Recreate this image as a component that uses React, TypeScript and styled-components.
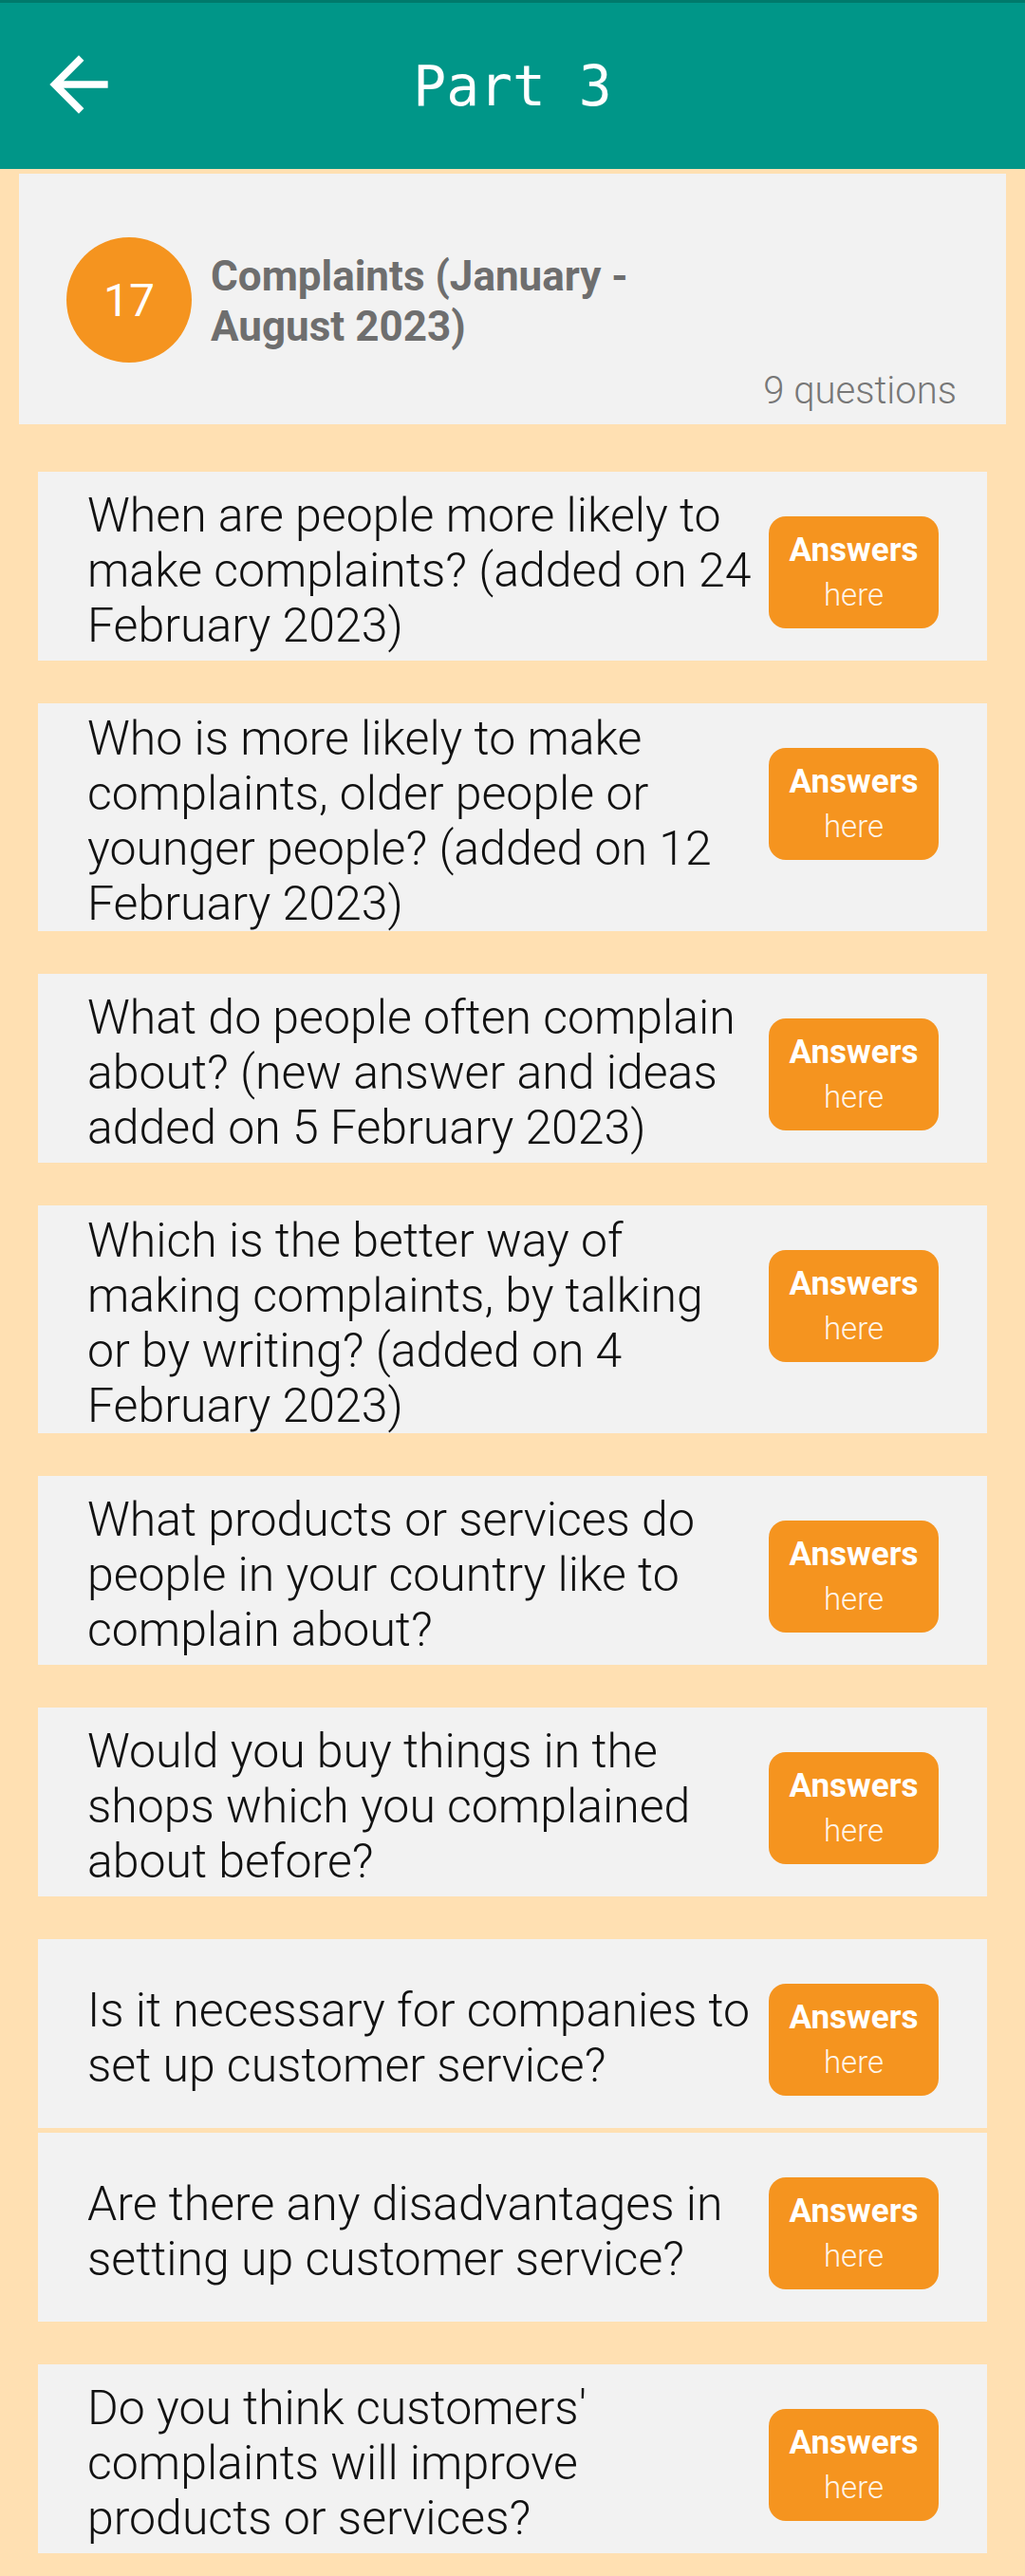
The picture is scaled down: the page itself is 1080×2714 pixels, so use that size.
import React from "react";
import styled, { createGlobalStyle } from "styled-components";

const GlobalStyle = createGlobalStyle`
  html, body {
    margin: 0;
    padding: 0;
    background: #ffe0b2;
  }
  * { box-sizing: border-box; }
`;

const Page = styled.div`
  width: 1080px;
  min-height: 2714px;
  background: #ffe0b2;
  font-family: Roboto, "Noto Sans", Arial, sans-serif;
`;

const Header = styled.header`
  height: 178px;
  background: #009688;
  border-top: 3px solid #00796b;
  display: grid;
  grid-template-columns: 1fr auto 1fr;
  align-items: center;
  padding-left: 37px;
`;

const BackButton = styled.div`
  width: 92px;
  height: 92px;
  display: flex;
  align-items: center;
  justify-content: center;
  margin-top: -3px;
`;

const Title = styled.h1`
  margin: 0;
  margin-left: -37px;
  font-family: "DejaVu Sans Mono", "Liberation Mono", monospace;
  font-weight: 400;
  font-size: 58px;
  color: #ffffff;
  letter-spacing: 0;
  line-height: 1;
`;

const TopicCard = styled.section`
  margin: 5px 20px 0;
  padding: 67px 52px 12px 50px;
  background: #f2f2f2;
`;

const TopicRow = styled.div`
  display: flex;
  align-items: center;
  gap: 20px;
`;

const NumberBadge = styled.div`
  width: 132px;
  height: 132px;
  flex: none;
  border-radius: 50%;
  background: #f5941f;
  color: #ffffff;
  display: flex;
  align-items: center;
  justify-content: center;
  font-size: 48px;
  font-weight: 400;
`;

const TopicTitle = styled.div`
  width: 520px;
  margin-top: 3px;
  font-size: 44px;
  font-weight: 700;
  line-height: 53px;
  color: #6e6e6e;
`;

const QuestionCount = styled.div`
  margin-top: 7px;
  text-align: right;
  font-size: 40px;
  font-weight: 300;
  line-height: 46px;
  color: #777777;
`;

const List = styled.div`
  padding: 5px 40px 23px;
`;

const QuestionCard = styled.div<{ $tight?: boolean }>`
  margin-top: ${(p) => (p.$tight ? "5px" : "45px")};
  min-height: 199px;
  padding: 8px 51px 0 52px;
  background: #f2f2f2;
  display: flex;
  align-items: center;
  gap: 18px;
`;

const QuestionText = styled.div`
  flex: 1;
  font-size: 50px;
  font-weight: 300;
  line-height: 58px;
  color: #111111;
`;

const AnswerButton = styled.div`
  flex: none;
  align-self: flex-start;
  margin-top: 39px;
  width: 179px;
  height: 118px;
  border-radius: 18px;
  background: #f5941f;
  display: flex;
  flex-direction: column;
  align-items: center;
  justify-content: center;
  color: #ffffff;
`;

const AnswerLabel = styled.span`
  font-size: 35px;
  font-weight: 700;
  line-height: 47px;
`;

const AnswerSub = styled.span`
  font-size: 33px;
  font-weight: 300;
  line-height: 47px;
  color: rgba(255, 255, 255, 0.92);
`;

const questions: { text: string; tight?: boolean }[] = [
  { text: "When are people more likely to make complaints? (added on 24 February 2023)" },
  { text: "Who is more likely to make complaints, older people or younger people? (added on 12 February 2023)" },
  { text: "What do people often complain about? (new answer and ideas added on 5 February 2023)" },
  { text: "Which is the better way of making complaints, by talking or by writing? (added on 4 February 2023)" },
  { text: "What products or services do people in your country like to complain about?" },
  { text: "Would you buy things in the shops which you complained about before?" },
  { text: "Is it necessary for companies to set up customer service?" },
  { text: "Are there any disadvantages in setting up customer service?", tight: true },
  { text: "Do you think customers' complaints will improve products or services?" },
];

const ArrowBack = () => (
  <svg width="92" height="92" viewBox="0 0 24 24" fill="#ffffff">
    <path d="M20 11H7.83l5.59-5.59L12 4l-8 8 8 8 1.41-1.41L7.83 13H20v-2z" />
  </svg>
);

export default function App() {
  return (
    <Page>
      <GlobalStyle />
      <Header>
        <BackButton>
          <ArrowBack />
        </BackButton>
        <Title>Part 3</Title>
        <div />
      </Header>
      <TopicCard>
        <TopicRow>
          <NumberBadge>17</NumberBadge>
          <TopicTitle>Complaints (January - August 2023)</TopicTitle>
        </TopicRow>
        <QuestionCount>9 questions</QuestionCount>
      </TopicCard>
      <List>
        {questions.map((q, i) => (
          <QuestionCard key={i} $tight={q.tight}>
            <QuestionText>{q.text}</QuestionText>
            <AnswerButton>
              <AnswerLabel>Answers</AnswerLabel>
              <AnswerSub>here</AnswerSub>
            </AnswerButton>
          </QuestionCard>
        ))}
      </List>
    </Page>
  );
}
